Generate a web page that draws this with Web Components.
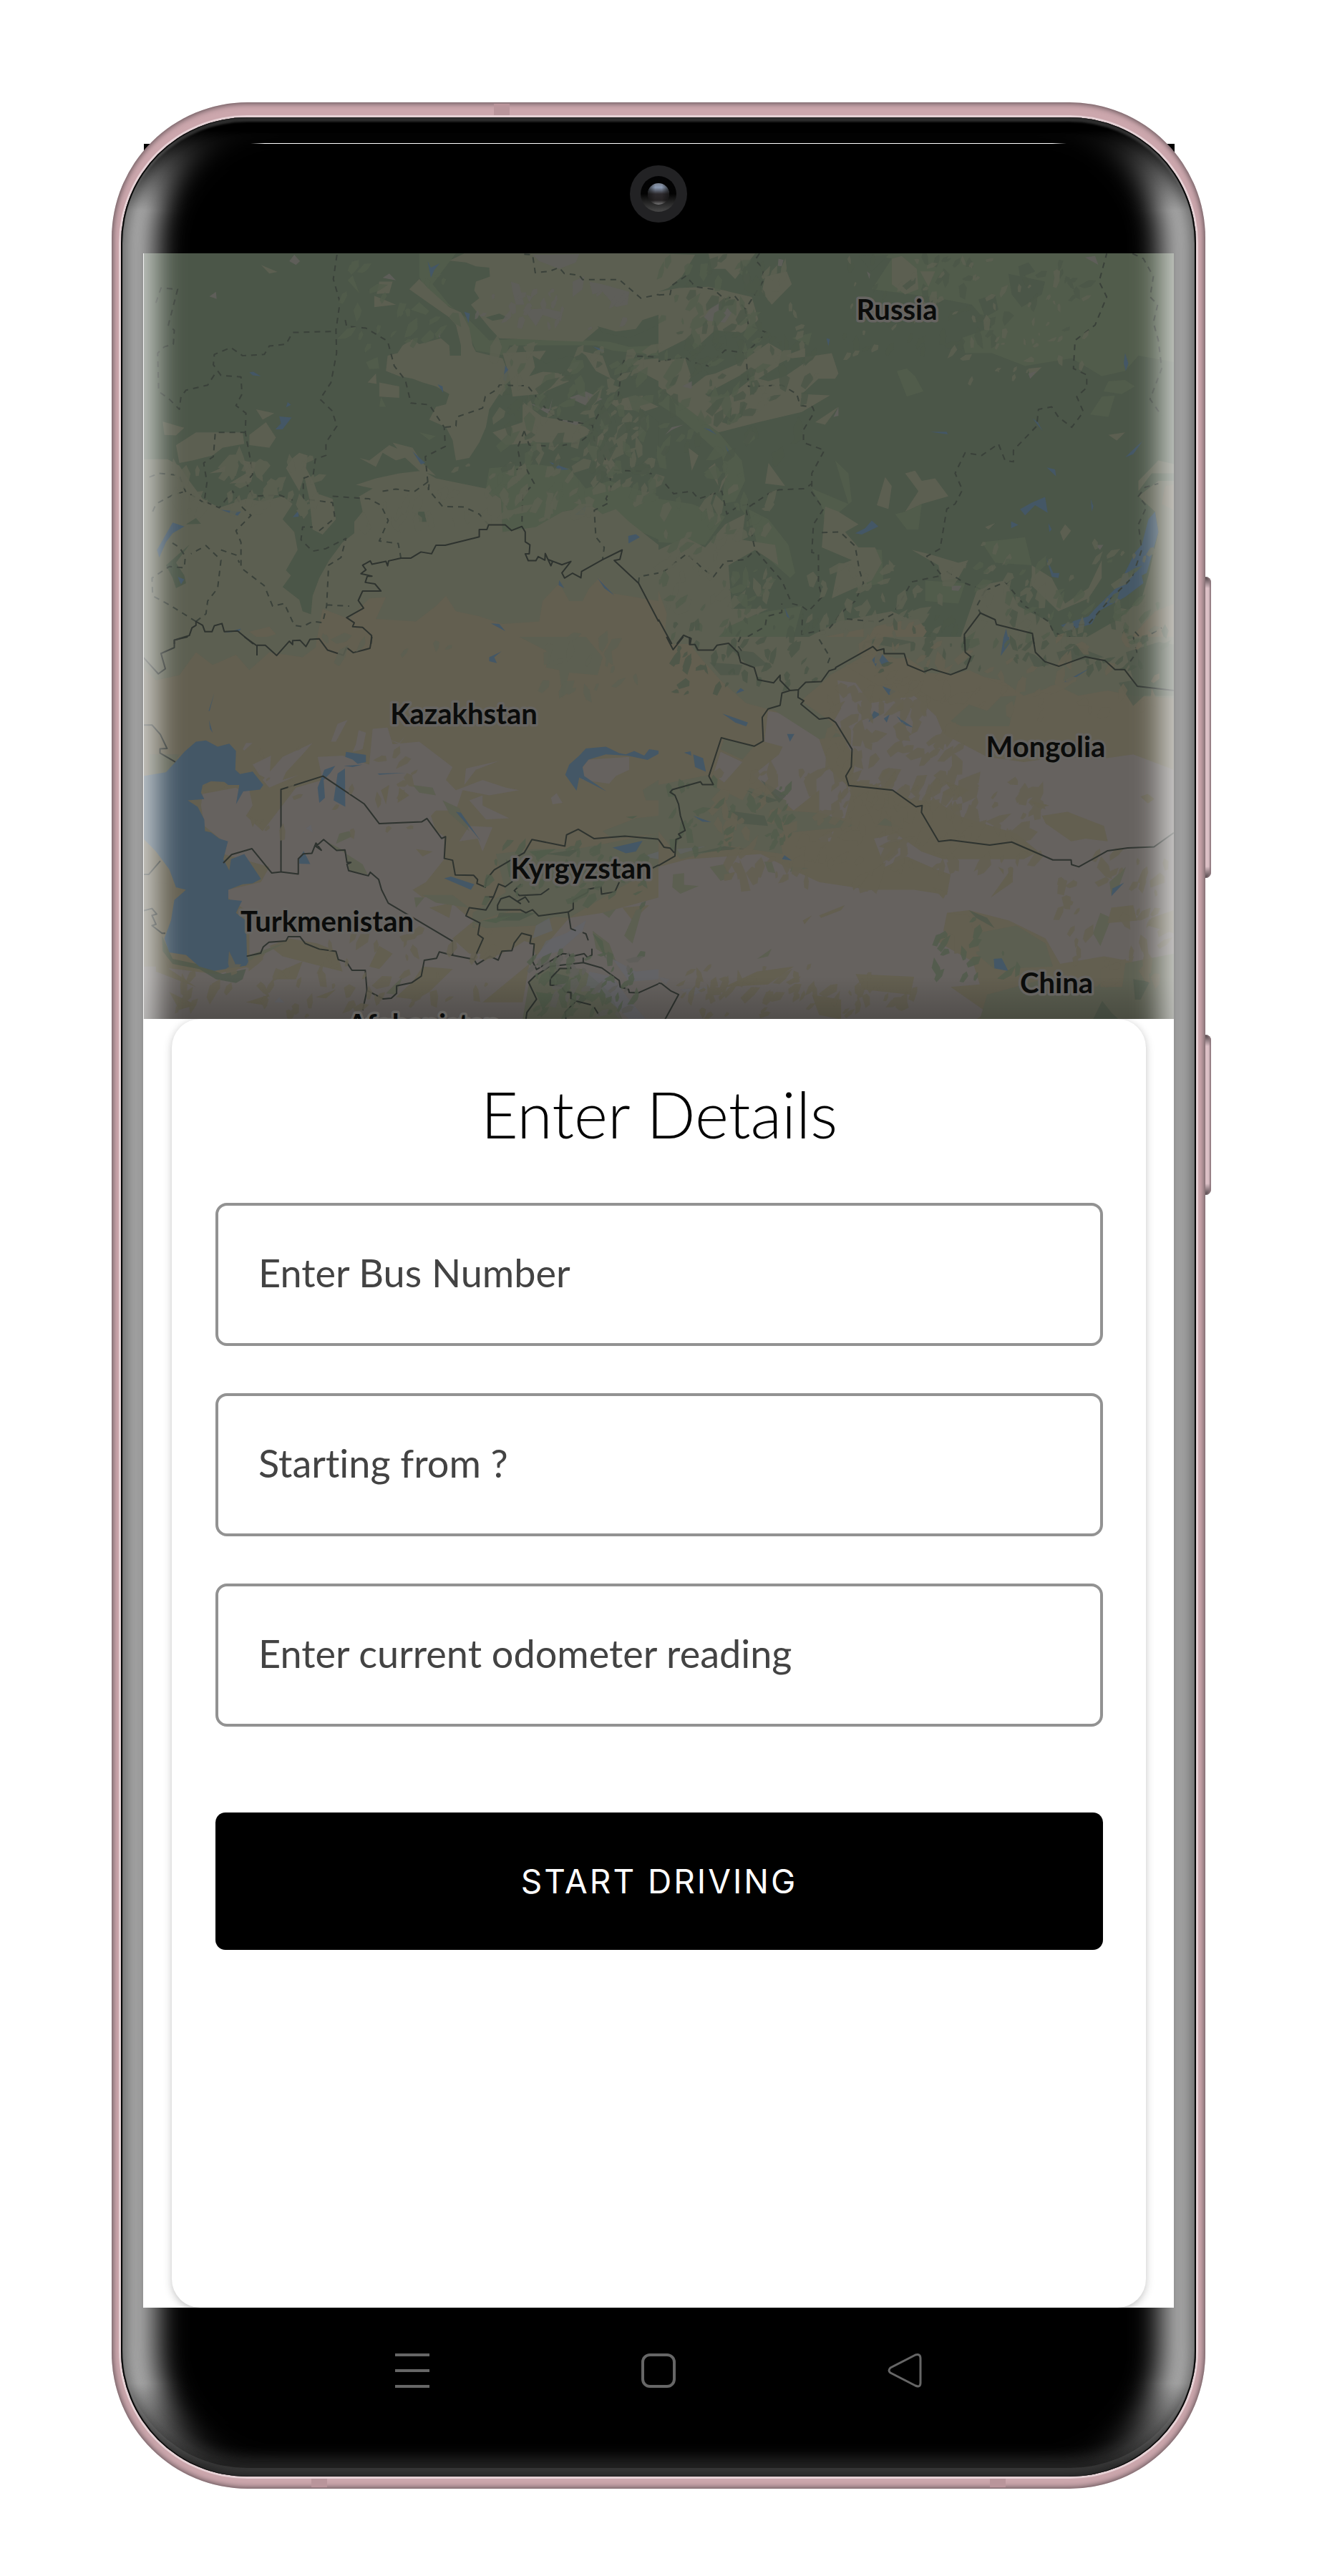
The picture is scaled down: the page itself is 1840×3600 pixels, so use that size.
<!DOCTYPE html>
<html lang="en">
<head>
<meta charset="utf-8">
<meta name="viewport" content="width=device-width, initial-scale=1">
<title>Enter Details</title>
<style>
html, body { margin: 0; background: #fff; }
body { font-family: Lato, "Noto Sans", sans-serif; color: #000; }
</style>
</head>
<body>
<phone-frame>
  <status-bar></status-bar>
  <region-map></region-map>
  <detail-sheet heading="Enter Details">
    <text-field name="bus" hint="Enter Bus Number"></text-field>
    <text-field name="start" hint="Starting from ?"></text-field>
    <text-field name="odometer" hint="Enter current odometer reading"></text-field>
    <primary-button slot="action">START DRIVING</primary-button>
  </detail-sheet>
  <nav-bar></nav-bar>
</phone-frame>

<script>
function define(name, html, ready) {
  const template = document.createElement('template');
  template.innerHTML = html;
  customElements.define(name, class extends HTMLElement {
    connectedCallback() {
      if (this.shadowRoot) return;
      this.attachShadow({ mode: 'open' }).append(template.content.cloneNode(true));
      if (ready) ready(this, this.shadowRoot);
    }
  });
}

/* Handset body: side keys, backing, pink rim, glass and light along the curved edges. */
define('phone-frame', `
<style>
:host { display: grid; padding: 143px 156px 122px; }
:host > * { grid-area: 1 / 1; }
.backing { background: #000; margin: 58px 43px 300px 45px; }
.rim { border-radius: 190px; background: #cca7ad; box-shadow: inset 0 0 9px 1px #53474b; }
.seam { width: 22px; height: 17px; background: #b9959b; }
.s1 { justify-self: start; margin: 2px 0 0 534px; }
.s2 { justify-self: start; align-self: end; margin: 0 0 2px 279px; }
.s3 { justify-self: end; align-self: end; margin: 0 279px 2px 0; }
.glass { margin: 21px 13px 17px; border-radius: 176px; background: #000; box-shadow: 0 0 0 3px #e6d1d5; }
.content { display: flex; flex-direction: column; margin: 57px 44px 17px; min-width: 0; }
.edge, .light { margin: 21px 13px 17px; border-radius: 176px; pointer-events: none; position: relative; }
.light {
  box-shadow: inset 50px 0 38px rgba(255,255,255,.69), inset -50px 0 38px rgba(255,255,255,.69);
  -webkit-mask: linear-gradient(transparent 16px, #000 130px, #000 calc(100% - 130px), transparent calc(100% - 16px));
  mask: linear-gradient(transparent 16px, #000 130px, #000 calc(100% - 130px), transparent calc(100% - 16px)); }
.edge {
  box-shadow: inset 2px 0 1px #000, inset -2px 0 1px #000,
    inset 9px 0 20px rgba(0,0,0,.4), inset -9px 0 20px rgba(0,0,0,.4),
    inset 0 6px 3px rgba(255,255,255,.26), inset 0 -12px 0 rgba(255,255,255,.1), inset 0 -24px 22px rgba(255,255,255,.17); }
.key { justify-self: end; align-self: start; width: 9px; border-radius: 0 8px 8px 0;
  background: linear-gradient(#4b4044, #dcc0c6 16px, #dcc0c6 calc(100% - 16px), #4b4044); box-shadow: inset -2px 0 2px #8d777d; }
.k1 { margin: 663px -8px 0 0; height: 421px; }
.k2 { margin: 1303px -8px 0 0; height: 224px; }
</style>
<div class="key k1"></div><div class="key k2"></div>
<div class="backing"></div>
<div class="rim"></div>
<div class="seam s1"></div><div class="seam s2"></div><div class="seam s3"></div>
<div class="glass"></div>
<div class="content"><slot></slot></div>
<div class="light"></div>
<div class="edge"></div>`);

define('status-bar', `
<style>
:host { display: flex; flex-direction: column; align-items: center; height: 154px; }
.line { align-self: stretch; height: 1px; margin: 0 150px; background: linear-gradient(90deg, transparent, #fff 20px, #fff calc(100% - 20px), transparent); }
svg { width: 80px; height: 80px; margin-top: 30px; }
</style>
<div class="line"></div>
<svg viewBox="0 0 80 80" aria-hidden="true">
  <defs>
    <linearGradient id="ring" x1="0" y1="0" x2="0" y2="1"><stop offset="0" stop-color="#020203"/><stop offset=".5" stop-color="#030303"/><stop offset="1" stop-color="#484848"/></linearGradient>
    <linearGradient id="gloss" x1="0" y1="0" x2="0" y2="1"><stop offset="0" stop-color="#77808f"/><stop offset=".2" stop-color="#8b9ab2"/><stop offset=".5" stop-color="#2d2a2d"/><stop offset=".8" stop-color="#262324"/><stop offset="1" stop-color="#777"/></linearGradient>
    <linearGradient id="side"><stop offset="0" stop-color="#111" stop-opacity=".75"/><stop offset=".35" stop-color="#111" stop-opacity="0"/><stop offset=".65" stop-color="#111" stop-opacity="0"/><stop offset="1" stop-color="#111" stop-opacity=".75"/></linearGradient>
  </defs>
  <circle cx="40" cy="40" r="40" fill="#222224"/>
  <circle cx="40" cy="40" r="25" fill="url(#ring)"/>
  <circle cx="40" cy="40" r="15" fill="url(#gloss)"/>
  <circle cx="40" cy="40" r="15" fill="url(#side)"/>
</svg>`);

/* Terrain map. Each group covers one quarter of the area and has its own grid. */
define('region-map', `
<style>
:host { display: block; overflow: hidden; }
svg { display: block; width: 100%; height: auto; }
.dg { fill: #4b5648; } .mg { fill: #515c4b; } .ol { fill: #5c5f51; } .st { fill: #635f50; } .mv { fill: #66625f; } .gr { fill: #5e5e59; } .wa { fill: #445766; }
.b, .d { fill: none; stroke: #2e332f; stroke-width: 2; stroke-linejoin: round; }
.b *, .d * { vector-effect: non-scaling-stroke; }
.d { stroke: #3a413a; stroke-dasharray: 8 7; }
text { font: 700 40px Lato, "Noto Sans", sans-serif; fill: #0b0c0b; stroke: #666461; stroke-width: 7px; stroke-linejoin: round; paint-order: stroke; text-anchor: middle; }
</style>
<svg viewBox="200 354 1440 1070" role="img" aria-label="Map of Central Asia">
<defs><linearGradient id="shade" x1="0" y1="0" x2="0" y2="1"><stop offset="0" stop-opacity="0"/><stop offset="1" stop-opacity=".2"/></linearGradient></defs>
<rect class="dg" x="190" y="340" width="1460" height="560"/>
<rect class="st" x="190" y="890" width="1460" height="560"/>
<g transform="translate(190 340) scale(.4656 .3571)">
  <path class="mg" d="M850,40 960,40 930,90 890,160 940,240 1000,300 1060,380 1200,370 1420,385 1480,405 1560,400 1568,440 1430,420 1380,400 1120,400 1110,440 1020,420 990,330 960,260 880,210 850,130ZM1050,960 1060,880 1200,865 1300,880 1350,960 1420,930 1568,990 1568,1160 1400,1060 1370,1030 1280,1050 1200,1140 1100,1140 1095,1000Z"/>
  <path class="ol" d="M940,68 985,40 1568,40 1568,290 1500,340 1480,370 1390,330 1340,385 1090,372 1060,330 1035,290 1005,240 1030,215 1015,185 1020,150 1062,130 1060,95 1020,90 990,75Z
  M785,430 800,400 830,375 850,395 915,372 940,400 942,440 975,440 975,400 960,320 940,290 880,235 820,180 850,140 880,180 940,250 975,270 1000,330 1010,400 1020,425 1100,450 1115,500 1100,570 1060,650 1050,720 1030,780 1000,840 960,850 950,770 930,720 880,690 900,640 930,630 940,590 900,560 860,545 830,530 790,520 750,500 755,440Z
  M20,845 95,845 130,870 160,930 200,1000 250,1035 330,1000 380,1010 440,990 470,1020 440,1080 475,1130 485,1200 450,1280 465,1300 440,1345 490,1395 500,1440 525,1452 530,1380 550,1310 580,1240 620,1170 655,1135 655,1090 680,1050 670,990 710,960 660,945 720,920 790,900 860,890 900,920 1050,960 1095,1000 1100,1130 1200,1110 1280,1050 1370,1030 1400,1060 1440,1040 1480,1090 1568,1180 1568,1568 20,1568Z
  M470,840 490,820 515,830 510,880 535,940 545,980 590,1000 600,1080 560,1140 530,1120 520,1000 505,910 490,970 450,880Z
  M120,790 180,740 320,740 325,785 260,800 230,830 170,850 130,860ZM340,750 390,700 420,760 400,800 340,790ZM80,697 145,722 120,752 85,750ZM360,650 415,665 380,690ZM375,85 425,112 400,118ZM730,545 790,560 790,605 730,600ZM715,205 780,240 715,250ZM730,150 770,150 760,195 722,198ZM695,545 720,510 722,550ZM670,840 700,850 760,790 830,830 780,850 740,820 720,875ZM770,780 830,800 860,860 900,910 850,890 800,830ZM1100,430 1230,420 1180,520 1250,490 1300,540 1210,590 1130,600 1120,520ZM1330,420 1400,440 1425,530 1380,500 1350,440ZM1070,740 1160,700 1160,620 1220,680 1330,700 1370,740 1310,780 1200,780 1110,790ZM1350,800 1400,740 1430,850 1460,900 1395,890ZM1420,620 1500,595 1568,640 1520,660 1450,650ZM360,860 345,935 280,940 330,900 320,850ZM220,900 270,870 265,895ZM1480,460 1568,450 1568,540 1510,500Z"/>
  <path class="dg" d="M1385,325 1440,345 1500,335 1520,300 1568,280 1568,320 1480,370 1400,350ZM1050,290 1090,275 1118,292 1070,303ZM150,1100 180,1075 195,1098ZM845,1050 865,1050 872,1090 850,1090ZM1190,440 1230,470 1300,440 1330,460 1280,510 1200,500ZM1430,660 1520,650 1568,700 1568,860 1500,870 1460,800ZM90,1260 160,1180 120,1250 145,1300 150,1330 120,1350 110,1310Z"/>
  <path class="mg" d="M635,145 650,125 670,195ZM690,465 725,445 730,490 700,492ZM825,260 850,230 880,265 870,280ZM735,600 750,640 730,640ZM850,740 900,755 880,770Z"/>
  <path class="st" d="M540,1568 560,1430 640,1470 700,1390 750,1385 720,1470 840,1480 900,1420 930,1380 960,1440 1030,1460 1100,1490 1210,1480 1220,1400 1270,1330 1300,1400 1340,1400 1360,1350 1390,1310 1430,1370 1568,1400 1568,1568ZM340,1520 400,1500 420,1530 370,1550Z"/>
  <path class="gr" d="M220,208 240,190 242,218ZM460,70 475,45 492,70 480,85ZM1125,150 1150,160 1165,240 1140,240 1130,190ZM1170,200 1190,210 1180,230ZM1165,260 1230,255 1280,270 1275,305 1220,280 1200,325ZM1310,150 1345,130 1340,180 1310,210ZM1360,150 1400,160 1480,190 1475,240 1440,250 1400,190 1370,200ZM1190,45 1330,42 1320,75 1270,100 1210,70ZM1180,625 1240,650 1250,605 1240,670ZM1300,605 1350,580 1400,610 1350,635ZM1270,690 1340,700 1320,712ZM740,135 760,118 780,145ZM905,360 915,340 912,370Z"/>
  <path class="wa" d="M875,70 885,95 912,78 895,105 885,135ZM985,268 1002,275 998,312ZM1108,478 1117,495 1110,540 1102,535ZM905,552 920,560 922,585ZM340,505 352,503 375,520 350,517ZM430,678 467,682 440,728 418,728 435,705ZM455,622 465,632 450,642ZM830,815 868,860 855,865ZM1240,855 1300,885 1270,888ZM255,1043 315,1050 305,1066ZM110,1093 145,1108 110,1135 90,1170 70,1230 63,1200ZM1318,1062 1350,1028 1345,1062ZM1477,1145 1500,1138 1512,1150 1478,1175ZM470,1072 488,1045 488,1070ZM1270,1318 1285,1350 1268,1338ZM1385,1310 1435,1378 1405,1350ZM1065,1488 1090,1490 1108,1518ZM1370,403 1405,417 1400,427ZM265,1525 315,1508 310,1518ZM125,1305 145,1315 135,1335Z"/>
  <g class="d"><path d="M603,45 592,140 612,230 600,340 602,430 585,545 552,610 588,655 603,715 570,780 570,830 538,845 532,905 502,920 502,1000 590,1015 597,1075 540,1135"/>
  <path d="M585,345 470,349 450,395 400,402 385,435 320,440 285,408 235,435 232,475 255,517 315,523 318,590 300,635 330,665 328,740 345,860 350,905 330,935 350,990 430,985 470,1005M628,300 632,325 690,332 755,383 775,480 808,535 825,625 880,632 925,720 928,795 868,835 878,965M235,515 215,555 150,575 135,600 130,650 100,610 68,580 65,430 85,405 112,395 115,340 97,320 125,180 75,175 58,240"/>
  <path d="M330,740 238,740 232,835 203,860 213,935 205,1010 250,1035 290,970 320,1035 345,1065 300,1125 315,1170 315,1270 385,1340 410,1420 445,1410 475,1495 500,1500 530,1480 560,1485 572,1420 578,1260 615,1230 630,1155 570,1195 530,1205 495,1160 500,1110 530,1110M40,915 70,900 130,908 148,970 210,1020M50,1050 60,1020 110,985 150,970M572,1415 640,1420"/>
  <path d="M590,990 700,1000 735,1025 757,1085 730,1165 787,1175 795,1232M740,970 780,962 835,972 880,930 878,965 920,1030 985,1032 1030,1060 1058,1102M928,720 960,715 962,680 1040,645 1048,600 1085,570 1090,555 1175,558 1235,655 1270,690 1370,712 1400,640 1447,600 1458,480 1470,440 1568,445"/>
  <path d="M1370,712 1375,770 1400,820 1422,890 1425,960 1410,1000 1420,1015 1375,1045 1380,1150 1405,1190 1400,1238M1165,735 1145,800 1155,870 1140,885 1170,880 1195,940 1160,985 1158,1105M1180,790 1260,795 1330,780 1370,740M1165,43 1190,45 1198,115 1240,110 1270,95 1285,118 1330,125 1340,142 1450,142 1515,215 1568,200M1435,888 1520,892 1568,910M1508,1330 1510,1305 1568,1290M1165,735 1180,790"/>
  <path d="M180,1480 100,1415 50,1380 48,1310 100,1265 145,1270 148,1225 130,1190 100,1165M180,1480 210,1450 215,1400 245,1350 255,1240 210,1183 165,1215M255,1200 300,1220 310,1250"/></g>
</g>
<g transform="translate(920 340) scale(.4656 .3571)">
  <path class="mg" d="M640,45 760,40 1568,40 1568,470 1440,440 1400,500 1330,520 1240,450 1100,480 1000,430 920,430 910,370 1000,330 940,240 820,210 640,180 700,60ZM0,580 80,620 180,740 250,850 260,930 230,1010 190,1020 200,900 190,830 130,760 60,680 0,630ZM0,1000 100,1020 200,1070 140,1180 0,1170ZM270,1040 330,1080 390,1180 410,1290 395,1310 300,1200ZM460,960 570,1020 530,850 570,900 580,1010 500,1100 490,1030ZM715,500 745,490 770,520 795,580 745,600ZM1330,600 1370,595 1350,680 1295,670ZM1350,540 1400,535 1430,560 1390,590 1335,580ZM740,1050 790,1020 780,1120 745,1120 710,1060ZM970,1170 1100,1150 1120,1260 1010,1250ZM590,1190 670,1200 675,1330 590,1350ZM400,370 460,350 450,400ZM170,1500 330,1440 430,1420 400,1568 170,1568ZM800,1320 920,1330 900,1410 800,1400Z"/>
  <path class="ol" d="M0,40 110,45 70,130 30,175 0,190ZM0,190 60,175 150,170 280,210 300,300 250,350 170,340 120,400 90,370 0,430ZM150,40 290,40 230,140 200,100 160,100ZM320,130 385,110 400,160 340,240 310,190ZM0,460 80,450 100,530 170,510 240,470 330,390 370,420 360,480 300,530 330,540 380,520 470,440 520,430 540,510 530,530 480,530 430,590 515,595 430,660 300,700 180,740 100,660 0,560ZM700,60 730,50 775,100 780,180 740,200 700,160ZM785,110 830,110 810,170ZM440,480 470,440 400,450 380,440 440,410ZM0,1200 80,1150 140,1190 200,1100 260,1060 250,1160 350,1180 360,1260 290,1200 210,1260 220,1430 330,1430 210,1500 160,1568 0,1568ZM500,1030 540,1050 600,1100 560,1130 600,1190 650,1190 670,1250 640,1320 520,1390 540,1260 580,1240 490,1190ZM680,915 700,950 690,1040 655,1025ZM740,900 770,890 790,930 830,920 870,990 790,1020 740,1050 780,970ZM760,1200 810,1215 900,1250 930,1240 900,1310 850,1320 840,1260ZM410,1568 540,1480 700,1440 800,1500 790,1568ZM900,1568 960,1340 1040,1320 1080,1420 1170,1480 1200,1568ZM1120,1260 1180,1310 1220,1410 1290,1350 1330,1240 1330,1310 1290,1390 1200,1440 1120,1340ZM1350,750 1400,740 1375,772ZM1440,930 1500,850 1568,870 1568,900 1480,900 1440,970ZM1440,990 1500,930 1568,930 1568,1568 1250,1568 1380,1470 1450,1390 1470,1300 1500,1130 1490,1050ZM1205,1130 1220,1100 1238,1125 1215,1165ZM1110,490 1150,485 1115,530ZM470,700 540,640 500,710ZM980,1110 1010,1095 990,1120ZM90,800 120,830 100,890ZM150,880 170,860 180,950ZM210,900 180,980 190,930ZM330,860 380,950 320,940Z"/>
  <path class="dg" d="M90,540 120,470 150,510 100,560ZM140,590 270,500 280,530 210,600 150,600ZM230,690 260,620 250,680ZM190,700 220,640 215,710ZM1080,90 1110,75 1130,110 1085,135ZM160,380 200,360 205,400 175,420ZM960,220 1010,200 1020,260 980,290ZM1050,120 1160,150 1150,200 1090,250 1060,200ZM600,50 690,45 640,110Z"/>
  <path class="st" d="M500,1540 720,1480 780,1470 805,1520 780,1568 480,1568ZM0,1360 25,1450 20,1510 35,1568 0,1568ZM1490,1440 1568,1400 1568,1568 1400,1568ZM1520,950 1568,940 1568,1060 1510,1020Z"/>
  <path class="gr" d="M170,230 230,250 200,310 130,300ZM100,540 70,560 100,570ZM360,60 375,65 370,90 358,88ZM625,110 635,120 633,140ZM1280,55 1310,50 1320,85ZM20,750 40,720 75,710 40,730ZM525,680 540,640 540,675ZM880,1340 910,1340 900,1360 880,1358ZM1310,1180 1335,1180 1325,1200ZM1110,510 1135,500 1115,530Z"/>
  <path class="wa" d="M1490,1050 1500,1130 1465,1290 1450,1300 1455,1330 1400,1385 1320,1440 1300,1490 1230,1515 1207,1495 1290,1460 1310,1430 1380,1340 1430,1210 1450,1180 1470,1080ZM1085,1040 1120,1015 1160,993 1168,1055 1130,1025 1100,1065ZM590,1135 620,1115 640,1085 660,1108 610,1140ZM815,738 865,738 868,748ZM1165,877 1190,885 1193,912ZM1400,838 1430,800 1452,775 1425,825ZM1400,430 1410,470 1402,500 1396,470ZM1163,1230 1185,1290 1203,1290 1200,1310 1180,1305ZM1058,1088 1080,1102 1058,1115ZM1122,685 1138,700 1153,735ZM135,722 155,728 175,750ZM200,788 218,830 210,825ZM504,372 514,375 510,402ZM378,1425 395,1470 385,1460ZM1043,1508 1053,1568 1030,1568ZM1297,1000 1305,1030 1300,1050ZM1170,1095 1180,1120 1173,1130Z"/>
  <g class="d"><path d="M303,40 290,65 315,100 313,150 260,260 270,320 325,350 262,430 200,418 150,480 100,465 80,445 0,462M0,202 35,200 40,165 82,128 110,170 165,180 200,220 228,205 260,258"/>
  <path d="M262,430 270,560 370,555 415,590 425,635 462,640 468,660 435,730 435,780 498,810 460,900 460,975 495,1040 465,1100 460,1210 480,1215 480,1330 490,1385 450,1440 430,1420 400,1410 370,1320 290,1200 262,1040 330,980 360,965 440,960 460,940M0,910 45,980 100,970 120,1000 190,970 205,1060 240,1028 290,1018M15,1285 85,1215 130,1270 165,1305 200,1245 260,1238 290,1200"/>
  <path d="M490,1132 545,1130 590,1185 603,1280 615,1330 590,1400 545,1450 530,1480 510,1510 430,1530 432,1450M565,1470 660,1482 705,1450 760,1325 850,1300 805,1225 845,1195 865,1040 890,1020 912,965 890,900 920,820 970,830 1020,785 1040,850 1065,855 1065,810 1135,715 1140,650 1180,640 1200,680 1240,720 1275,660 1255,600 1285,565 1285,515 1245,490 1250,380 1310,320 1345,210 1322,150 1345,40"/>
  <path d="M865,1285 920,1330 980,1360 1040,1325 1100,1420 1170,1480 1185,1520 1230,1550 1250,1495 1290,1490 1350,1400 1420,1310 1450,1200 1440,1100 1465,1030 1440,990 1460,955 1500,940M1422,40 1455,60 1485,130 1475,210 1498,240 1485,310 1500,380 1510,490 1475,610 1510,675M240,1560 320,1500 325,1460 370,1445 370,1410M980,1360 955,1420 966,1447M1430,1520 1450,1550 1510,1505"/></g>
</g>
<g transform="translate(190 890) scale(.4656 .3571)">
  <path class="ol" d="M20,0 540,0 540,40 500,80 400,60 340,130 300,70 230,110 180,60 130,150 60,170 20,120ZM1150,0 1350,0 1400,80 1385,150 1300,140 1280,240 1270,130 1230,120 1240,60ZM1080,850 1200,830 1320,830 1568,770 1568,900 1440,990 1300,1100 1200,1090 1060,1130 1010,1140 1010,1080 1110,1000ZM40,460 130,460 100,540 40,540ZM1568,560 1568,640 1530,640 1520,600ZM1430,790 1400,760 1500,710 1568,700 1568,770Z"/>
  <path class="mv" d="M195,660 200,615 300,590 320,605 340,600 350,660 330,700 380,760 480,590 560,560 545,470 620,465 700,500 710,360 755,355 770,420 850,410 950,510 930,560 960,600 1040,560 1110,590 1150,600 1060,620 980,600 960,680 900,680 885,700 900,760 925,780 925,870 870,960 830,990 860,1020 920,1010 990,1090 1015,1110 950,1180 1000,1240 1060,1240 1140,1180 1190,1200 1200,1250 1300,1100 1400,1080 1568,1020 1568,1497 20,1497 20,1290 60,1290 240,1320 340,1290 340,1080 275,1020 275,990 375,960 400,900 262,850 262,800 205,740ZM380,560 440,470 530,415 500,460 450,530 440,560 490,540 400,590ZM350,500 405,465 400,560 370,540ZM585,410 605,340 635,325 600,410ZM660,420 668,365 690,375 680,440 650,450ZM755,400 790,415 810,385 790,420ZM1340,510 1358,480 1480,470 1480,520 1440,545 1420,575 1340,560ZM1000,640 1040,620 1040,660 1120,710 1050,715ZM1000,740 1070,745 1040,840 1025,790 970,800ZM985,580 990,515 1090,485 1020,520ZM1245,630 1262,612 1280,650 1250,655ZM320,440 330,415 350,415 325,445Z"/>
  <path class="st" d="M545,1200 600,1230 620,1310 560,1290 440,1250 400,1210 460,1180ZM730,1210 770,1240 730,1300 700,1290ZM860,1290 950,1300 880,1390 840,1420 780,1410 830,1350ZM430,1310 500,1270 480,1340 420,1340ZM330,1430 400,1400 380,1440ZM540,1410 600,1380 570,1415ZM100,1390 180,1440 130,1460ZM60,1200 100,1300 180,1370 60,1310ZM60,960 120,970 150,990 110,1040 60,1030ZM340,700 360,720 350,745ZM735,600 760,580 750,655ZM790,590 820,620 785,650ZM840,830 890,840 860,860ZM1010,1120 1150,1060 1190,1170 1130,1220 1060,1260 1030,1260 1045,1180ZM1040,1430 1180,1280 1160,1430ZM880,1060 950,1040 940,1100ZM195,600 220,565 275,580 250,600 210,610ZM440,1100 420,1090 445,1095ZM1460,1060 1540,1050 1490,1110Z"/>
  <path class="ol" d="M1160,1497 1180,1350 1240,1290 1340,1300 1420,1390 1460,1497ZM610,770 640,760 650,780 600,810ZM830,580 890,590 900,620 850,610ZM860,1010 950,1010 1000,1060 900,1040ZM835,1020 865,1020 840,1060ZM570,800 600,835 620,840 680,890 695,930 640,915 630,840ZM1010,1120 1130,1080 1280,1080 1200,1130 1050,1140ZM1400,1080 1440,1065 1420,1100ZM1500,1070 1520,1060 1490,1200 1465,1170ZM750,1395 800,1330 780,1400ZM330,1250 450,1195 400,1230 340,1270ZM920,640 970,670 1000,760 940,690ZM1370,1150 1420,1200 1440,1270 1380,1220Z"/>
  <path class="dg" d="M78,1170 110,1260 180,1280 260,1320 330,1300 320,1340 300,1355 240,1340 190,1300 110,1280 80,1230ZM1240,1310 1300,1330 1290,1390 1240,1360ZM1090,1080 1200,1080 1150,1110 1080,1110ZM1230,850 1330,830 1300,860ZM1290,1380 1360,1410 1330,1440Z" opacity=".75"/>
  <path class="mg" d="M1040,1110 1130,1090 1080,1120ZM1180,840 1260,830 1210,870ZM1370,1160 1400,1190 1410,1260ZM1200,1390 1260,1400 1220,1460ZM1110,870 1160,920 1120,940ZM1470,705 1505,700 1490,712Z"/>
  <path fill="#61646a" opacity=".6" d="M1200,1130 1240,1100 1250,1150 1190,1180ZM1230,1190 1290,1160 1350,1110 1340,1150 1270,1230 1200,1260ZM1360,1310 1430,1330 1480,1420 1530,1497 1480,1497 1400,1400 1350,1370ZM1430,1260 1500,1310 1568,1300 1568,1340 1480,1350ZM1520,860 1568,840 1568,870ZM510,750 525,735 530,765ZM415,1430 430,1410 445,1432Z"/>
  <path class="wa" d="M22,545 90,530 118,490 145,450 180,410 210,405 245,430 280,418 300,447 298,520 312,537 350,527 382,580 372,598 322,605 300,655 310,580 277,580 265,568 225,565 200,580 195,610 205,635 155,640 185,665 205,715 207,760 225,765 250,790 276,800 262,870 280,915 285,870 325,850 375,947 350,965 320,968 277,990 277,1028 318,1033 300,1080 330,1110 333,1250 340,1285 235,1307 190,1290 150,1245 100,1235 85,1180 105,1110 115,1030 150,990 120,980 100,910 60,840 22,790ZM1288,540 1300,500 1330,465 1350,437 1410,430 1450,455 1470,460 1495,447 1525,465 1540,440 1568,445 1568,458 1535,482 1475,465 1410,460 1358,480 1340,510 1345,545 1412,605 1330,550 1322,602ZM630,450 690,462 690,490 665,497 650,480 628,470ZM565,520 598,505 582,535 563,560 567,630 550,650 545,590ZM605,535 627,515 628,665 593,640ZM623,505 680,500 650,510ZM490,868 503,838 523,889 490,888ZM925,945 945,938 1015,968 1005,990ZM960,685 975,688 1035,800 1000,745ZM1430,825 1520,798 1500,840 1470,847ZM1060,80 1097,57 1075,80 1083,103 1060,95ZM235,220 218,290 221,290ZM219,325 230,375 222,360ZM725,535 810,532 730,540Z"/>
  <g class="b"><path d="M155,0 115,13 115,42 75,65 88,125 67,145 22,80M325,0 363,35 363,73M363,33 388,33 422,73 460,17 470,30 470,15 492,13 510,38 522,10 550,8 575,52 622,72 632,42 652,62 702,45 708,0M22,345 48,345 73,382 93,437 72,438 72,455 118,490M22,930 38,930 73,877M22,1072 48,1063 62,1085 48,1090 60,1125 48,1130 78,1160 88,1160"/>
  <path d="M262,885 287,852 348,829 407,924 435,920 435,597 561,545 685,654 730,731 857,724 873,711 917,789 929,782 925,867 950,874 958,932 1013,933 1025,950 1023,965 1048,980 1052,948 1075,912 1130,870 1165,845 1188,793 1287,819 1292,775 1327,753 1375,790 1467,780 1568,792"/>
  <path d="M435,920 487,928 487,869 502,849 528,847 540,807 556,835 540,820 563,793 602,836 627,834 633,883 645,883 633,890 638,915 697,935 703,921 728,949 737,990 757,1042 950,1191 950,1246 1014,1262 1042,1180 1026,1165 1032,1120 990,1092 1000,1060 1050,1069 1073,1017 1048,1018M1073,1017 1088,967 1108,978 1130,957"/>
  <path d="M332,1250 374,1238 382,1213 399,1195 450,1190 457,1173 492,1173 508,1200 550,1222 600,1231 607,1263 632,1273 648,1305 688,1305 693,1384 680,1462M693,1384 742,1417 766,1414 782,1395 782,1366 828,1353 856,1328 865,1266 902,1258 910,1233 950,1246M1014,1262 1023,1282 1062,1250 1087,1265 1098,1230 1128,1228 1135,1198 1157,1160 1186,1170 1182,1200 1195,1202 1190,1270 1202,1302 1280,1240 1300,1242 1303,1252 1345,1240 1355,1255 1368,1245 1368,1220M1340,1157 1350,1162 1357,1188"/>
  <path d="M1170,1497 1173,1470 1202,1418 1178,1352 1195,1330 1240,1290 1342,1275 1342,1255M1342,1275 1398,1296 1450,1345 1453,1370 1478,1380 1480,1392 1508,1393 1568,1358M1305,1290 1305,1298 1272,1298 1243,1338 1243,1363 1275,1366 1287,1390 1305,1392 1305,1415 1320,1425 1288,1470 1290,1497M1320,1425 1365,1440M1375,1450 1390,1482"/>
  <path d="M1155,1045 1120,1015 1095,1025 1085,1050 1085,1068 1153,1068 1170,1080 1190,1068 1208,1092 1297,1077 1312,1065 1312,1030 1355,1000 1357,988 1395,978 1397,1007 1437,998 1450,960M1297,1077 1305,1142 1320,1150M1145,1035 1168,1018 1180,1040M1155,968 1135,993 1150,1012 1215,1008 1240,985M1550,905 1568,893"/></g>
</g>
<g transform="translate(920 890) scale(.5102 .3571)">
  <path class="mv" d="M300,290 340,300 400,360 440,400 470,520 530,600 510,710 440,700 440,600 370,680 260,540 330,460 340,430 290,410ZM490,170 540,180 580,260 700,230 760,310 780,380 900,470 1000,490 1100,470 1200,480 1300,460 1411,520 1411,1300 1220,1250 1100,1280 1060,1180 960,1110 850,1070 790,1080 800,1140 760,1190 860,1270 880,1360 800,1370 900,1470 870,1497 0,1497 0,900 80,870 280,850 350,900 440,960 580,990 700,990 790,1010 800,930 760,910 680,860 620,900 590,790 650,770 720,840 780,870 1000,870 1040,840 980,770 820,700 760,640 700,640 620,590 530,560 540,480 480,330 500,280ZM150,540 170,450 230,490 180,570ZM0,680 45,640 40,740 0,760ZM440,790 480,760 470,800 445,805Z"/>
  <path class="ol" d="M70,0 1411,0 1411,240 1300,230 1230,210 1150,230 1090,190 1000,230 940,170 860,150 800,200 700,110 640,80 580,60 470,150 440,190 390,250 470,330 500,390 440,400 320,290 240,260 170,170 120,90ZM800,330 870,240 980,230 960,350 830,350ZM180,400 260,430 230,480 170,440ZM0,580 140,540 160,590 230,640 250,590 350,640 350,680 450,690 540,740 330,770 340,850 200,820 60,870 0,760ZM140,900 180,890 200,940 170,955ZM40,930 70,925 70,970 110,975 60,1005 38,980ZM870,1160 980,1130 1060,1200 1080,1290 920,1300 870,1240ZM900,1400 1080,1330 1200,1370 1270,1280 1411,1240 1411,1497 880,1497ZM1210,1080 1240,1100 1210,1210 1190,1160ZM1235,960 1280,900 1260,980 1240,1010ZM290,880 310,880 320,925 300,920ZM270,1260 310,1220 300,1250ZM365,900 410,905 360,920ZM600,735 620,710 660,745Z"/>
  <path class="st" d="M510,110 680,80 740,140 800,150 850,130 960,200 900,290 840,260 760,250 680,180 600,190ZM1050,700 1120,685 1220,740 1230,800 1170,790 1130,800 1060,730ZM910,1020 970,900 970,960ZM500,860 520,890 500,890ZM440,1090 510,1050 500,1070 445,1100ZM395,1110 420,1090 400,1125ZM790,1080 850,1090 880,1230 810,1240 810,1170 780,1150ZM1240,1060 1300,1050 1310,1110 1230,1120ZM1350,1100 1411,1070 1411,1160 1340,1130ZM1320,625 1340,615 1358,635 1340,652ZM1015,640 1070,660 1040,670ZM780,560 850,600 820,630ZM270,1310 370,1290 300,1360 180,1370ZM540,1320 700,1330 690,1400 560,1380ZM420,1400 500,1420 500,1497 440,1480ZM180,930 210,920 200,950 180,955ZM750,980 790,1000 780,1025ZM1210,1300 1280,1260 1270,1370 1210,1370ZM930,900 945,910 945,930Z"/>
  <path class="dg" d="M140,100 230,110 220,150 170,150ZM200,50 260,60 300,110 250,120ZM560,20 620,0 700,20 640,40ZM1090,60 1150,40 1220,80 1100,100ZM1280,60 1370,20 1411,30 1411,230 1330,230 1300,270 1260,180 1300,170ZM1010,60 1030,70 1070,110 1030,120ZM1300,1340 1345,1350 1320,1420 1305,1420ZM1190,1497 1215,1425 1240,1470 1260,1497ZM850,1070 900,1100 920,1140 870,1100ZM240,600 330,640 300,650ZM190,680 290,700 300,740 220,730ZM90,850 180,820 240,830 180,835ZM330,650 280,560 350,620Z" opacity=".7"/>
  <path class="wa" d="M585,90 605,55 632,100 598,125ZM613,193 650,213 632,230ZM575,333 590,290 608,303ZM617,320 633,303 625,335ZM652,310 698,355 670,343ZM175,300 245,335 240,350 210,335ZM95,460 122,475 130,528 100,510ZM352,380 372,380 360,410ZM945,0 960,0 962,25 937,75ZM1188,117 1120,180 1105,180ZM918,1260 940,1258 958,1308 920,1297ZM338,870 345,855 365,875ZM1275,962 1240,1015 1243,985ZM95,700 145,725 120,723ZM215,215 225,200 235,210 213,222ZM70,453 88,448 90,465Z"/>
  <path fill="#61646a" opacity=".5" d="M60,1380 140,1370 90,1410ZM50,830 130,820 60,850ZM0,1330 30,1340 20,1360Z"/>
  <g class="d"><path d="M440,10 470,80 460,115M225,0 215,30 230,60M1300,0 1310,60 1290,100"/></g>
</g>
<g id="flecks"></g>
<g class="b" transform="translate(920 890) scale(.5102 .3571)"><path d="M22,0 40,50 68,0M85,0 85,30 100,30 108,52 150,52 160,33 192,25 218,62 225,100 262,120 272,168 315,180 333,150 333,170 360,210 338,220 333,268 300,282 284,315 287,408 262,428 172,395 138,545 150,578 120,578 115,567 38,598 32,608 45,620 55,655 60,700 73,758 55,772 62,785 48,793 45,858 0,895M0,793 15,823 32,827 43,845M360,210 383,207 403,178 446,175 467,133 485,125 485,120 587,38 598,54 617,47 618,66 673,66 682,110 727,137 748,126 800,148 843,124 855,78 840,60 838,0"/>
  <path d="M383,207 382,237 398,250 390,263 440,322 467,317 485,335 530,440 528,508 513,545 521,582 641,600 705,665 722,660 720,687 767,801 800,795 907,815 967,803 1080,873 1130,873 1131,891 1151,900 1230,837 1285,826 1357,822 1411,767M1025,0 1032,60 1058,97 1096,115 1168,78 1223,93 1250,128 1276,128 1311,193 1411,210M0,1355 8,1357 33,1385 55,1400 18,1497"/></g>
<g class="b" transform="translate(190 340) scale(.4656 .3571)"><path d="M115,1568 115,1553 160,1535 168,1505 180,1495 180,1480 200,1495 207,1520 228,1520 235,1497 258,1488 265,1520 305,1517 352,1568M705,1568 707,1535 680,1503 650,1500 655,1485 632,1465 683,1428 667,1398 680,1361 735,1361 717,1333 688,1327 694,1303 708,1303 675,1293 690,1278 680,1260 703,1243 708,1256 750,1245 755,1262 758,1243 795,1232 825,1232 855,1208 887,1215 900,1182 928,1182 1030,1149 1030,1120 1053,1120 1058,1102 1108,1102 1127,1124 1158,1108 1168,1130 1168,1168 1182,1180 1180,1215 1168,1215 1177,1242 1200,1242 1207,1226 1227,1240 1228,1214 1245,1262 1250,1245 1238,1238 1278,1258 1305,1245 1278,1290 1286,1310 1310,1291 1335,1309 1337,1284 1400,1238 1459,1200 1452,1237 1435,1241 1508,1330 1568,1480"/></g>
<g class="b" transform="translate(920 340) scale(.4656 .3571)"><path d="M0,1472 40,1568M55,1568 75,1534 98,1547 95,1568M918,1568 918,1530 966,1447 1010,1473 1014,1492 1122,1527 1127,1568"/></g>
<rect x="190" y="1365" width="1460" height="60" fill="url(#shade)"/>
<rect x="200" y="354" width="1" height="1071" fill="#e4e6e2"/>
<text x="1253" y="447">Russia</text><text x="648" y="1012">Kazakhstan</text><text x="1461" y="1058">Mongolia</text>
<text x="812" y="1228">Kyrgyzstan</text><text x="457" y="1302">Turkmenistan</text><text x="1476" y="1388">China</text><text x="592" y="1446">Afghanistan</text>
</svg>`, (host, root) => {
  /* Small terrain flecks, from a fixed seed so that the map is always the same. */
  let seed = 7;
  const rnd = () => (seed = (seed * 16807) % 2147483647) / 2147483647;
  const areas = [
    [230, 640, 220, 80, 46, 'ol', 13], [500, 650, 330, 90, 40, 'ol', 12], [690, 480, 230, 240, 90, 'ol', 13], [690, 500, 230, 200, 50, 'mg', 13],
    [480, 370, 160, 160, 26, 'mg', 12], [700, 500, 220, 170, 34, 'dg', 14], [920, 360, 150, 330, 60, 'mg', 13], [920, 480, 220, 160, 40, 'dg', 13], [940, 360, 140, 180, 36, 'dg', 12],
    [1180, 360, 340, 130, 60, 'dg', 11], [1180, 360, 300, 150, 40, 'ol', 8], [1340, 400, 180, 140, 26, 'ol', 7], [1040, 370, 100, 200, 22, 'ol', 12],
    [920, 680, 160, 180, 44, 'ol', 12], [920, 700, 160, 190, 34, 'mg', 12], [1130, 790, 260, 100, 50, 'ol', 12], [1350, 760, 280, 140, 46, 'ol', 11], [1350, 780, 280, 120, 36, 'mg', 11],
    [940, 860, 200, 110, 50, 'dg', 10], [1200, 860, 430, 80, 50, 'dg', 9], [1200, 890, 430, 110, 60, 'st', 13],
    [1160, 950, 180, 200, 90, 'st', 15], [1000, 1080, 250, 160, 80, 'st', 15], [1230, 1090, 230, 130, 80, 'st', 15], [950, 1350, 330, 70, 60, 'st', 12], [1480, 1190, 150, 200, 44, 'st', 13],
    [240, 1340, 300, 80, 34, 'st', 12], [450, 1300, 240, 110, 26, 'st', 12], [670, 1180, 240, 90, 50, 'mg', 10], [740, 1330, 160, 90, 50, 'mg', 10], [740, 1330, 160, 90, 24, 'gr', 10],
    [930, 1090, 180, 100, 46, 'mg', 10], [350, 1040, 240, 130, 22, 'st', 11], [440, 890, 200, 30, 8, 'ol', 12], [760, 890, 130, 80, 18, 'ol', 12], [660, 400, 230, 60, 24, 'gr', 8], [1310, 1280, 130, 90, 16, 'mg', 11]
  ];
  let out = '';
  for (const [x, y, w, h, n, cls, size] of areas) {
    let d = '';
    for (let i = 0; i < n; i++) {
      const cx = x + rnd() * w, cy = y + rnd() * h, tilt = -.3 - rnd() * 1.6, s = size * (.5 + rnd());
      const k = 5, pts = [];
      for (let j = 0; j < k; j++) {
        const a = j / k * 6.283, r = s * (.45 + rnd() * .8), px = Math.cos(a) * r, py = Math.sin(a) * r * .45;
        pts.push((cx + px * Math.cos(tilt) - py * Math.sin(tilt)).toFixed(1) + ',' + (cy + px * Math.sin(tilt) + py * Math.cos(tilt)).toFixed(1));
      }
      d += 'M' + pts.join(' ') + 'Z';
    }
    out += '<path class="' + cls + '" opacity=".85" d="' + d + '"/>';
  }
  root.getElementById('flecks').innerHTML = out;
});

define('detail-sheet', `
<style>
:host { display: block; background: #fff; padding: 0 39px 0 40px; overflow: hidden; }
form { border-radius: 40px; background: #fff; box-shadow: 0 3px 12px rgba(0,0,0,.25); padding: 72px 60px 500px 61px; display: flex; flex-direction: column; }
h1 { margin: 0 0 65px; font: 300 90px/120px Lato, "Noto Sans", sans-serif; text-align: center; }
.fields { display: flex; flex-direction: column; gap: 66px; margin-bottom: 120px; }
</style>
<form onsubmit="return false"><h1></h1><div class="fields"><slot></slot></div><slot name="action"></slot></form>`,
(host, root) => { root.querySelector('h1').textContent = host.getAttribute('heading'); });

define('text-field', `
<style>
:host { display: block; }
input { display: block; box-sizing: border-box; width: 100%; height: 200px; padding: 0 56px 6px; border: 4px solid #929292; border-radius: 16px; background: transparent;
  font: 400 54px Lato, "Noto Sans", sans-serif; font-variant-ligatures: none; color: #222; outline: 0; }
input::placeholder { color: #434343; opacity: 1; }
</style>
<input type="text">`,
(host, root) => {
  const input = root.querySelector('input');
  input.name = host.getAttribute('name');
  input.placeholder = host.getAttribute('hint');
  input.setAttribute('aria-label', host.getAttribute('hint'));
});

define('primary-button', `
<style>
:host { display: block; }
button { display: block; width: 100%; height: 192px; border: 0; border-radius: 14px; background: #000; color: #fff; font: 400 46px Inter, "Noto Sans", sans-serif; letter-spacing: 3px; cursor: pointer; }
</style>
<button type="submit"><slot></slot></button>`);

define('nav-bar', `
<style>
:host { display: block; height: 236px; }
nav { display: grid; grid-template-columns: repeat(3, 1fr); justify-items: center; padding: 64px 204px 0; }
button { border: 0; padding: 0; background: none; display: block; }
svg { display: block; width: 48px; height: 48px; fill: none; stroke: #666; stroke-width: 4; }
</style>
<nav aria-label="System">
  <button aria-label="Recent apps"><svg viewBox="0 0 48 48"><path d="M0 2H48M0 24H48M0 46H48"/></svg></button>
  <button aria-label="Home"><svg viewBox="0 0 48 48"><rect x="2" y="2" width="44" height="44" rx="10"/></svg></button>
  <button aria-label="Back"><svg viewBox="0 0 48 48"><path stroke-width="3" stroke-linejoin="round" d="M4 20 39 2Q46 0 46 7V41Q46 48 39 45L4 27Q0 24 4 20Z"/></svg></button>
</nav>`);
</script>
</body>
</html>
